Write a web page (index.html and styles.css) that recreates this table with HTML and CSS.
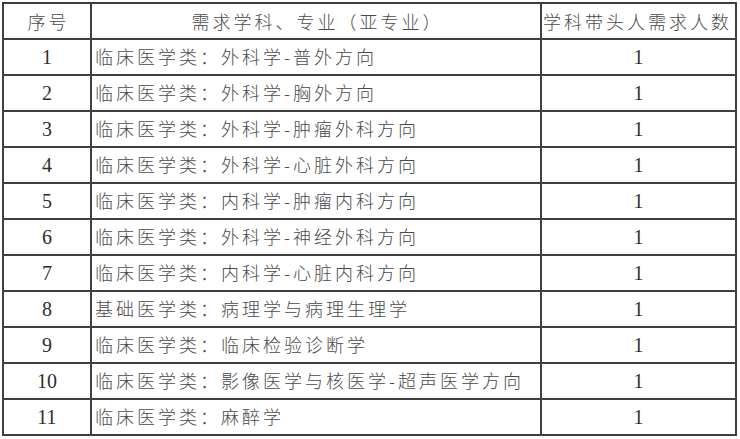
FILE: index.html
```html
<!DOCTYPE html>
<html lang="zh">
<head>
<meta charset="utf-8">
<link rel="stylesheet" href="styles.css">
</head>
<body>
<div class="table">
  <div class="cell head">序号</div>
  <div class="cell head">需求学科、专业（亚专业）</div>
  <div class="cell head c3">学科带头人需求人数</div>

  <div class="cell num">1</div><div class="cell txt">临床医学类：外科学-普外方向</div><div class="cell num">1</div>
  <div class="cell num">2</div><div class="cell txt">临床医学类：外科学-胸外方向</div><div class="cell num">1</div>
  <div class="cell num">3</div><div class="cell txt">临床医学类：外科学-肿瘤外科方向</div><div class="cell num">1</div>
  <div class="cell num">4</div><div class="cell txt">临床医学类：外科学-心脏外科方向</div><div class="cell num">1</div>
  <div class="cell num">5</div><div class="cell txt">临床医学类：内科学-肿瘤内科方向</div><div class="cell num">1</div>
  <div class="cell num">6</div><div class="cell txt">临床医学类：外科学-神经外科方向</div><div class="cell num">1</div>
  <div class="cell num">7</div><div class="cell txt">临床医学类：内科学-心脏内科方向</div><div class="cell num">1</div>
  <div class="cell num">8</div><div class="cell txt">基础医学类：病理学与病理生理学</div><div class="cell num">1</div>
  <div class="cell num">9</div><div class="cell txt">临床医学类：临床检验诊断学</div><div class="cell num">1</div>
  <div class="cell num">10</div><div class="cell txt">临床医学类：影像医学与核医学-超声医学方向</div><div class="cell num">1</div>
  <div class="cell num">11</div><div class="cell txt">临床医学类：麻醉学</div><div class="cell num">1</div>
</div>
</body>
</html>
```
FILE: styles.css
```css
html, body {
  margin: 0;
  padding: 0;
  background: #ffffff;
}
body {
  padding: 2px;
}
.table {
  display: grid;
  grid-template-columns: 88px 450px 195px;
  grid-auto-rows: 36px;
  width: 735px;
  box-sizing: border-box;
  border-left: 2px solid #3f3f3f;
  border-top: 2px solid #3f3f3f;
}
.cell {
  box-sizing: border-box;
  border-right: 2px solid #3f3f3f;
  border-bottom: 2px solid #3f3f3f;
  display: flex;
  align-items: center;
  overflow: hidden;
  white-space: nowrap;
}
.head, .txt {
  font-family: "Noto Sans CJK SC", "Noto Sans", sans-serif;
  font-weight: 300;
  font-size: 18px;
  letter-spacing: 3px;
  color: #4a4a4a;
}
.head {
  justify-content: center;
  padding-left: 3px;
}
.c3 {
  justify-content: flex-start;
  padding-left: 1px;
}
.txt {
  padding-left: 3px;
  padding-bottom: 2px;
}
.num {
  justify-content: center;
  font-family: "Liberation Serif", "Times New Roman", serif;
  font-size: 20px;
  color: #2e2e2e;
}
```
